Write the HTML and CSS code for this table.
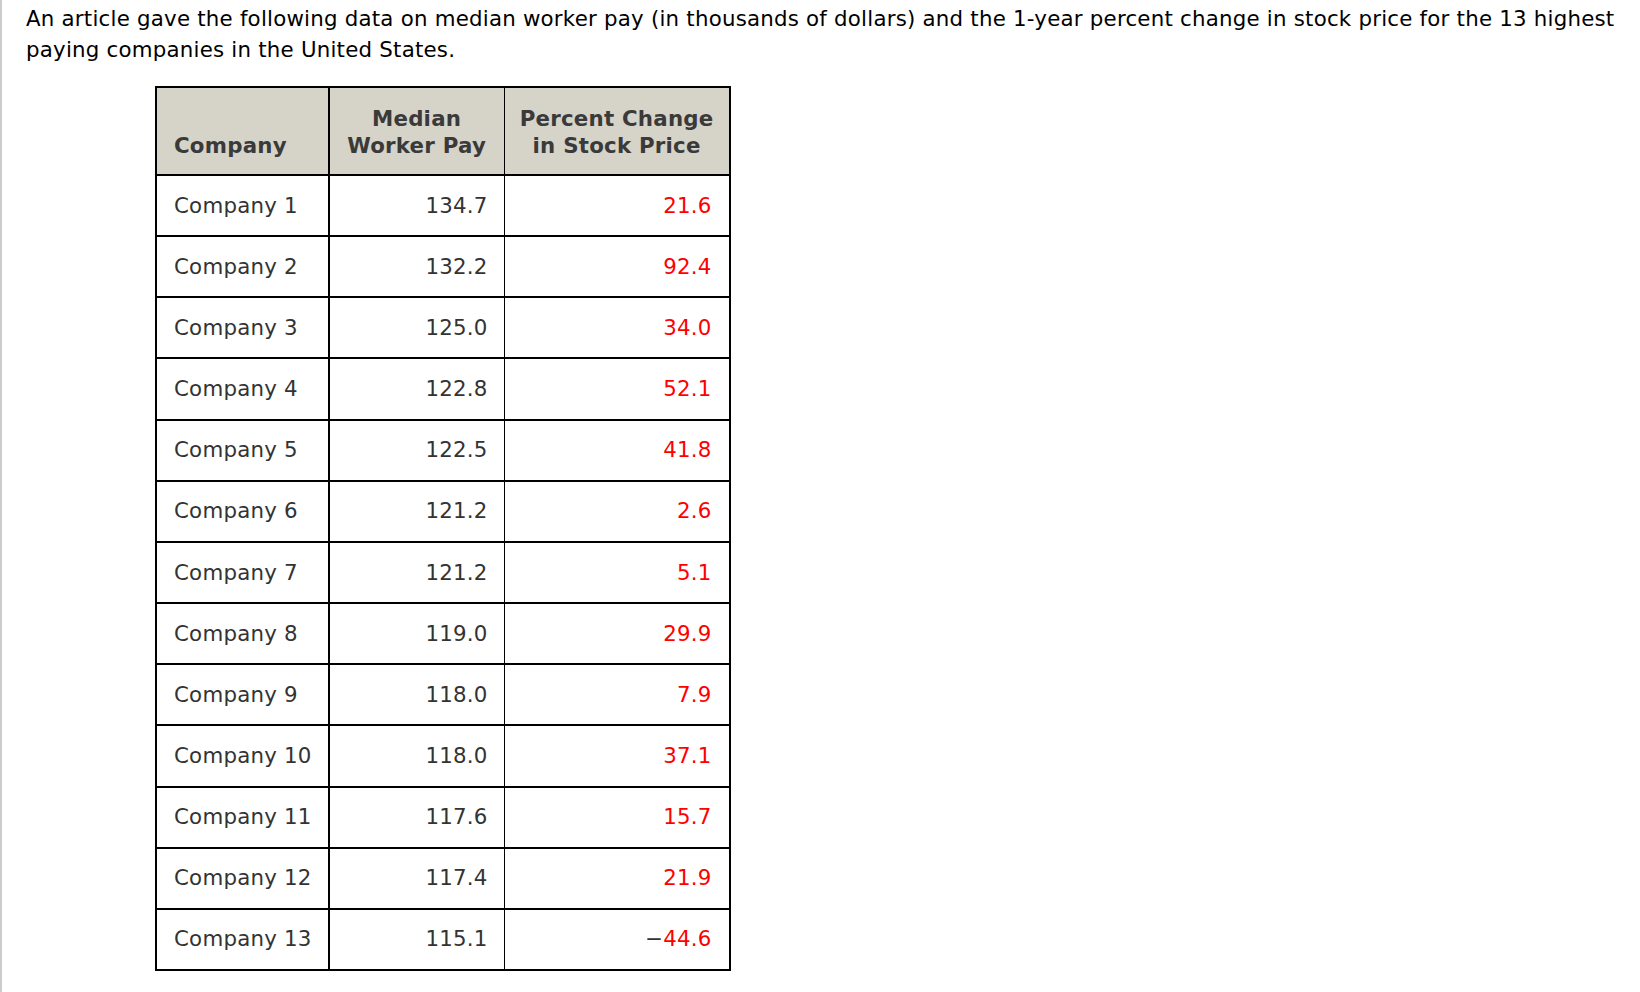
FILE: index.html
```html
<!DOCTYPE html>
<html lang="en">
<head>
<meta charset="utf-8">
<title>Median worker pay</title>
<link rel="stylesheet" href="styles.css">
</head>
<body>
<div class="page">
  <p class="intro">An article gave the following data on median worker pay (in thousands of dollars) and the 1-year percent change in stock price for the 13 highest paying companies in the United States.</p>
  <table class="data">
    <thead>
      <tr>
        <th class="c1">Company</th>
        <th class="c2">Median<br>Worker Pay</th>
        <th class="c3">Percent Change<br>in Stock Price</th>
      </tr>
    </thead>
    <tbody>
      <tr><td class="c1">Company 1</td><td class="c2">134.7</td><td class="c3"><span class="red">21.6</span></td></tr>
      <tr><td class="c1">Company 2</td><td class="c2">132.2</td><td class="c3"><span class="red">92.4</span></td></tr>
      <tr><td class="c1">Company 3</td><td class="c2">125.0</td><td class="c3"><span class="red">34.0</span></td></tr>
      <tr><td class="c1">Company 4</td><td class="c2">122.8</td><td class="c3"><span class="red">52.1</span></td></tr>
      <tr><td class="c1">Company 5</td><td class="c2">122.5</td><td class="c3"><span class="red">41.8</span></td></tr>
      <tr><td class="c1">Company 6</td><td class="c2">121.2</td><td class="c3"><span class="red">2.6</span></td></tr>
      <tr><td class="c1">Company 7</td><td class="c2">121.2</td><td class="c3"><span class="red">5.1</span></td></tr>
      <tr><td class="c1">Company 8</td><td class="c2">119.0</td><td class="c3"><span class="red">29.9</span></td></tr>
      <tr><td class="c1">Company 9</td><td class="c2">118.0</td><td class="c3"><span class="red">7.9</span></td></tr>
      <tr><td class="c1">Company 10</td><td class="c2">118.0</td><td class="c3"><span class="red">37.1</span></td></tr>
      <tr><td class="c1">Company 11</td><td class="c2">117.6</td><td class="c3"><span class="red">15.7</span></td></tr>
      <tr><td class="c1">Company 12</td><td class="c2">117.4</td><td class="c3"><span class="red">21.9</span></td></tr>
      <tr><td class="c1">Company 13</td><td class="c2">115.1</td><td class="c3">&minus;<span class="red">44.6</span></td></tr>
    </tbody>
  </table>
</div>
</body>
</html>
```
FILE: styles.css
```css
html, body {
  margin: 0;
  padding: 0;
  background: #ffffff;
}
body {
  font-family: "DejaVu Sans", Verdana, sans-serif;
  font-size: 21.33px;
  letter-spacing: 0.22px;
  color: #000;
}
.page {
  min-height: 992px;
  box-sizing: border-box;
  border-left: 2px solid #cccccc;
  padding: 3px 10px 0 24px;
}
.intro {
  margin: 0;
  line-height: 31px;
  max-width: 1600px;
}
.data {
  margin: 21px 0 0 129px;
  border-collapse: separate;
  border-spacing: 0;
  border: 2px solid #000;
  color: #333;
}
.data th {
  background: #d6d3c9;
  font-weight: bold;
  line-height: 27px;
  height: 88px;
  box-sizing: border-box;
  padding: 0 16px 15px 16px;
  vertical-align: bottom;
  border-bottom: 2px solid #000;
  color: #3a3a3a;
  white-space: nowrap;
}
.data td {
  height: 61.17px;
  box-sizing: border-box;
  padding: 0 16px 0 17px;
  vertical-align: middle;
  border-bottom: 2px solid #000;
  line-height: 26px;
  white-space: nowrap;
}
.data tbody tr:last-child td {
  border-bottom: 0;
  height: 59.17px;
}
.c1 {
  width: 171px;
  box-sizing: border-box;
  border-right: 2px solid #000;
  text-align: left;
}
.data td.c1, .data th.c1 {
  padding-left: 17px;
}
.c2 {
  width: 175px;
  box-sizing: border-box;
  border-right: 1px solid #000;
  text-align: right;
}
.data th.c2, .data th.c3 {
  text-align: center;
  padding-left: 6px;
  padding-right: 6px;
}
.c3 {
  width: 224px;
  box-sizing: border-box;
  text-align: right;
}
.data td.c3 {
  padding-right: 17px;
}
.red {
  color: #ff0000;
}
```
